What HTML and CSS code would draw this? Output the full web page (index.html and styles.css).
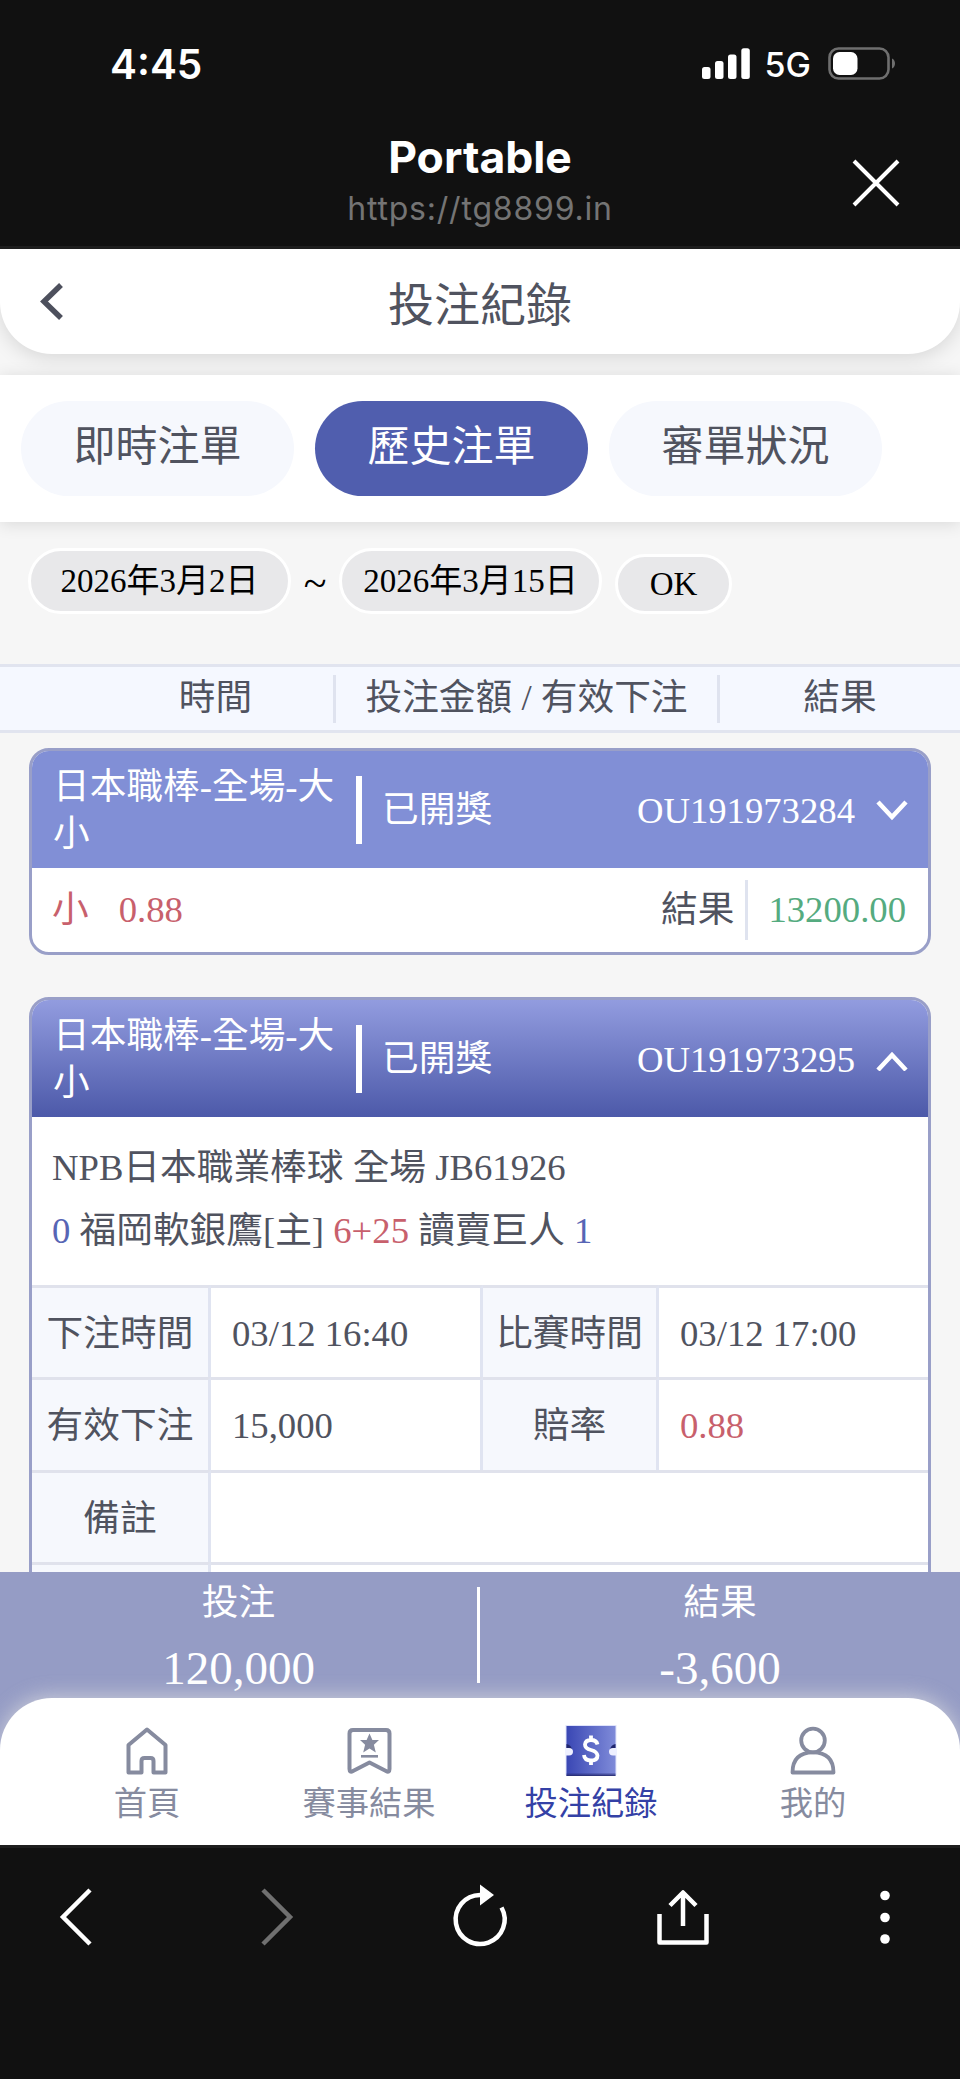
FILE: index.html
```html
<!DOCTYPE html>
<html lang="zh-Hant">
  <head>
    <meta charset="UTF-8" />
    <meta name="viewport" content="width=device-width, initial-scale=1.0" />
    <title>投注紀錄</title>
    <link rel="stylesheet" href="styles.css" />
  </head>
  <body>
    <div class="browser-top">
      <div class="status-bar">
        <span class="clock">4:45</span>
        <div class="status-icons">
          <svg class="signal" width="48" height="32" viewBox="0 0 48 32" fill="#fff">
            <rect x="0" y="19" width="8.5" height="12" rx="2.5" />
            <rect x="13" y="13" width="8.5" height="18" rx="2.5" />
            <rect x="26" y="6.5" width="8.5" height="24.5" rx="2.5" />
            <rect x="39.3" y="0.3" width="8.5" height="30.7" rx="2.5" />
          </svg>
          <span class="network">5G</span>
          <svg class="battery" width="68" height="34" viewBox="0 0 68 34">
            <rect x="1.5" y="1.5" width="59" height="30" rx="9" fill="none" stroke="#6f6f6f" stroke-width="2.6" />
            <rect x="5" y="5" width="24.5" height="23" rx="6.5" fill="#fff" />
            <path d="M64 11.5c4 1.5 4 8.500 0 10z" fill="#6f6f6f" />
          </svg>
        </div>
      </div>
      <div class="title-bar">
        <div class="site">
          <div class="site-name">Portable</div>
          <div class="site-url">https://tg8899.in</div>
        </div>
        <svg class="close" width="50" height="50" viewBox="0 0 50 50" fill="none" stroke="#fff" stroke-width="4">
          <path d="M3 3l44 44M47 3L3 47" />
        </svg>
      </div>
    </div>

    <main class="page">
      <header class="page-header">
        <svg class="back" width="26" height="40" viewBox="0 0 26 40" fill="none" stroke="#4d505d" stroke-width="5.500">
          <path d="M22 3L5 19.500L22 36" />
        </svg>
        <h1>投注紀錄</h1>
      </header>

      <nav class="tabs">
        <a class="tab">即時注單</a>
        <a class="tab active">歷史注單</a>
        <a class="tab">審單狀況</a>
      </nav>

      <div class="date-filter">
        <span class="date">2026年3月2日</span>
        <span class="tilde">~</span>
        <span class="date">2026年3月15日</span>
        <button class="ok">OK</button>
      </div>

      <div class="list-head">
        <span class="col-time">時間</span>
        <span class="col-amount">投注金額 / 有效下注</span>
        <span class="col-result">結果</span>
      </div>

      <section class="bet">
        <div class="bet-head">
          <span class="bet-type">日本職棒-全場-大小</span>
          <span class="bet-state">已開獎</span>
          <span class="bet-id">OU191973284</span>
          <svg class="arrow" width="34" height="24" viewBox="0 0 34 24" fill="none" stroke="#fff" stroke-width="4.500">
            <path d="M3 4l14 15L31 4" />
          </svg>
        </div>
        <div class="bet-summary">
          <span class="pick">小</span>
          <span class="odds">0.88</span>
          <span class="result-label">結果</span>
          <span class="result-value">13200.00</span>
        </div>
      </section>

      <section class="bet open">
        <div class="bet-head">
          <span class="bet-type">日本職棒-全場-大小</span>
          <span class="bet-state">已開獎</span>
          <span class="bet-id">OU191973295</span>
          <svg class="arrow" width="34" height="24" viewBox="0 0 34 24" fill="none" stroke="#fff" stroke-width="4.500">
            <path d="M3 23l14-15l14 15" />
          </svg>
        </div>
        <div class="match">
          <p>NPB日本職業棒球 全場 JB61926</p>
          <p><span class="blue">0</span> 福岡軟銀鷹[主] <span class="red">6+25</span> 讀賣巨人 <span class="blue">1</span></p>
        </div>
        <div class="detail">
          <div class="label">下注時間</div>
          <div class="value">03/12 16:40</div>
          <div class="label">比賽時間</div>
          <div class="value">03/12 17:00</div>
          <div class="label">有效下注</div>
          <div class="value">15,000</div>
          <div class="label">賠率</div>
          <div class="value red">0.88</div>
          <div class="label">備註</div>
          <div class="value wide"></div>
          <div class="label"></div>
          <div class="value wide"></div>
        </div>
      </section>
    </main>

    <div class="totals">
      <div class="total">
        <span class="total-label">投注</span>
        <span class="total-value">120,000</span>
      </div>
      <div class="total">
        <span class="total-label">結果</span>
        <span class="total-value">-3,600</span>
      </div>
    </div>

    <nav class="bottom-nav">
      <a class="nav-item">
        <svg width="52" height="52" viewBox="0 0 52 52" fill="none" stroke="#868b9f" stroke-width="4" stroke-linejoin="round">
          <path d="M26 4.500L44.500 20V47.500H32.500V36q0-3-3-3h-6q-3 0-3 3v11.500H7.500V20z" />
        </svg>
        <span>首頁</span>
      </a>
      <a class="nav-item">
        <svg width="52" height="52" viewBox="0 0 52 52" fill="none" stroke="#868b9f" stroke-width="4" stroke-linejoin="round">
          <path d="M10 5h33q3.500 0 3.500 3.500V44q0 4-3.500 2L26.500 37.500L10 46q-3.500 2-3.500-2V8.500Q6.500 5 10 5z" />
          <path d="M18 31.300h17" stroke-width="2.600" />
          <path d="M26.500 8.500l2.900 6.500h6.600l-5.100 4.800l1.900 7.700l-6.300-4l-6.300 4l1.900-7.700l-5.100-4.800h6.600z" fill="#868b9f" stroke="none" />
        </svg>
        <span>賽事結果</span>
      </a>
      <a class="nav-item active">
        <svg width="52" height="52" viewBox="0 0 52 52">
          <defs>
            <linearGradient id="ticket" x1="0" y1="0" x2="1" y2="0">
              <stop offset="0" stop-color="#3a47b4" />
              <stop offset="1" stop-color="#7f8bd9" />
            </linearGradient>
            <linearGradient id="ticket-edge" x1="0" y1="0" x2="0" y2="1">
              <stop offset="0" stop-color="#2a2f80" stop-opacity="0" />
              <stop offset="1" stop-color="#262a6c" />
            </linearGradient>
          </defs>
          <rect x="0.500" y="0" width="51" height="50" fill="#dfe3fb" />
          <rect x="1.500" y="1" width="49" height="50" fill="url(#ticket)" />
          <rect x="1.500" y="47.500" width="49" height="3.500" fill="url(#ticket-edge)" />
          <path d="M1.500 19q5 1 5.500 6h-5.500zM50.500 19q-5 1-5.500 6h5.500z" fill="#20266e" />
          <path d="M0 23h4q4 0 4 3.700t-4 3.700h-4zM52 23h-4q-4 0-4 3.700t4 3.700h4z" fill="#eef0ff" />
          <path d="M32.500 19.500q-1-4.500-6.500-4.500t-6 4.500q0 4 6 5.500t6.500 5.500q0 5-6.500 5t-7-5.500M26 10.500v5M26 35v5" fill="none" stroke="#fff" stroke-width="3.800" />
        </svg>
        <span>投注紀錄</span>
      </a>
      <a class="nav-item">
        <svg width="52" height="52" viewBox="0 0 52 52" fill="none" stroke="#868b9f" stroke-width="3.800" stroke-linejoin="round">
          <circle cx="26" cy="15.500" r="11.800" />
          <path d="M5.500 47.500h41q0-20-20.500-20.200q-20.500 .2-20.500 20.200z" />
        </svg>
        <span>我的</span>
      </a>
    </nav>

    <div class="toolbar">
      <svg width="60" height="66" viewBox="0 0 60 66" fill="none" stroke="#fff" stroke-width="4.500">
        <path d="M45 6L18 33L45 60" />
      </svg>
      <svg width="60" height="66" viewBox="0 0 60 66" fill="none" stroke="#707070" stroke-width="4.500">
        <path d="M15 6L42 33L15 60" />
      </svg>
      <svg width="60" height="66" viewBox="0 0 60 66" fill="none" stroke="#fff" stroke-width="4.500">
        <path d="M30 11A24.500 24.500 0 1 0 51.500 23.500" />
        <path d="M30 0.500v21L44 11z" fill="#fff" stroke="none" />
      </svg>
      <svg width="60" height="66" viewBox="0 0 60 66" fill="none" stroke="#fff" stroke-width="4.500">
        <path d="M6.500 30v28.500h47V30M30 42V8M17 21.500L30 8.500L43 21.500" stroke-linejoin="round" />
      </svg>
      <svg width="60" height="66" viewBox="0 0 60 66" fill="#fff">
        <circle cx="30" cy="11.500" r="4.800" />
        <circle cx="30" cy="33.500" r="4.800" />
        <circle cx="30" cy="55" r="4.800" />
      </svg>
    </div>
  </body>
</html>
```
FILE: styles.css
```css
* {
  box-sizing: border-box;
  margin: 0;
  padding: 0;
}

body {
  display: flex;
  flex-direction: column;
  width: 960px;
  height: 2079px;
  overflow: hidden;
  background-color: #111;
  color: #50535f;
  font-family: "Liberation Serif", "Noto Sans CJK TC", serif;
  font-size: 36.7px;
}

svg {
  display: block;
  flex-shrink: 0;
}

/* browser chrome */
.browser-top {
  height: 249px;
  flex-shrink: 0;
  border-bottom: 3px solid #1e1e1e;
  color: #fff;
  font-family: Inter, "Liberation Sans", sans-serif;
}

.status-bar {
  display: flex;
  justify-content: space-between;
  height: 128px;
  padding: 0 64px 0 110px;
  align-items: center;
}

.clock {
  font-size: 40.5px;
  font-weight: 600;
}

.status-icons {
  display: flex;
  align-items: center;
}

.network {
  margin: 1px 17px 0 15px;
  font-size: 34px;
  font-weight: 500;
}

.title-bar {
  position: relative;
  text-align: center;
}

.site-name {
  padding-top: 2px;
  font-size: 44.5px;
  font-weight: 700;
  line-height: 54px;
}

.site-url {
  margin-top: 3px;
  color: #747474;
  font-size: 32px;
  letter-spacing: 0.8px;
  line-height: 44px;
}

.close {
  position: absolute;
  top: 30px;
  right: 59px;
}

/* page */
.page {
  height: 1323px;
  flex-shrink: 0;
  overflow: hidden;
  background-color: #f6f6f6;
}

.page-header {
  display: grid;
  grid-template-columns: 80px 1fr 80px;
  align-items: center;
  height: 105px;
  background-color: #fff;
  border-radius: 0 0 52px 52px;
  box-shadow: 0 4px 20px rgba(0, 0, 0, 0.13);
}

.back {
  margin: 0 0 0 39px;
}

.page-header h1 {
  padding-top: 8px;
  text-align: center;
  font-size: 46px;
  font-weight: 400;
  line-height: 60px;
}

.tabs {
  position: relative;
  display: flex;
  gap: 21px;
  margin-top: 21px;
  padding: 26px 21px;
  background-color: #fff;
  box-shadow: 0 2px 16px rgba(0, 0, 0, 0.12);
}

.tab {
  width: 273px;
  height: 95px;
  border-radius: 48px;
  background-color: #f6f8fd;
  text-align: center;
  font-size: 42px;
  line-height: 93px;
}

.tab.active {
  background-color: #505eae;
  color: #fff;
}

.date-filter {
  display: flex;
  align-items: flex-end;
  height: 92px;
  padding-left: 28px;
  color: #000;
  font-size: 33px;
}

.date,
.ok {
  border: 3px solid #fff;
  border-radius: 34px;
  background-color: #e8e8ea;
  text-align: center;
}

.date {
  width: 263px;
  height: 66px;
  line-height: 61px;
}

.tilde {
  width: 48px;
  text-align: center;
  font-size: 42px;
  line-height: 62px;
}

.ok {
  width: 117px;
  height: 60px;
  margin-left: 13px;
  font: inherit;
  line-height: 50px;
}

.list-head {
  display: flex;
  align-items: center;
  height: 69px;
  margin-top: 50px;
  border-top: 3px solid #e1e4ef;
  border-bottom: 3px solid #e1e4ef;
  background-color: #f5f8ff;
  text-align: center;
  line-height: 46px;
}

.list-head span {
  height: 48px;
}

.col-time {
  width: 336px;
  padding-left: 98px;
  border-right: 3px solid #dfe3ef;
}

.col-amount {
  width: 384px;
  border-right: 3px solid #dfe3ef;
}

.col-result {
  flex: 1;
}

.bet {
  margin: 15px 29px 43px;
  overflow: hidden;
  border: 3px solid #999fc8;
  border-radius: 20px;
  background-color: #fff;
}

.bet-head {
  display: flex;
  align-items: center;
  height: 117px;
  padding-right: 19px;
  background-color: #818fd6;
  color: #fff;
}

.open .bet-head {
  background: linear-gradient(#929cdf, #4c59a9);
}

.bet-type {
  width: 324px;
  padding: 0 18px 0 21px;
  line-height: 47px;
}

.bet-state {
  flex: 1;
  height: 68px;
  padding-left: 20px;
  border-left: 6px solid #fff;
  line-height: 68px;
}

.bet-id {
  margin: 2px 20px 0 0;
}

.bet-summary {
  display: flex;
  align-items: center;
  height: 84px;
  padding: 0 22px 0 20px;
  line-height: 60px;
}

.pick,
.odds,
.red {
  color: #c8606c;
}

.odds {
  flex: 1;
  margin-left: 30px;
}

.result-label {
  padding-right: 11px;
}

.result-value {
  padding-left: 20px;
  border-left: 3px solid #dfe3ef;
  color: #55ab80;
}

.bet.open {
  margin-top: -1px;
}

.match {
  height: 168px;
  padding: 19px 20px 0;
  line-height: 63px;
}

.blue {
  color: #5765b5;
}

.detail {
  display: grid;
  grid-template-columns: 179px 272px 176px 1fr;
  grid-auto-rows: 92.3px;
}

.label,
.value {
  border-top: 3px solid #e0e2ec;
  line-height: 92px;
}

.label {
  border-right: 3px solid #e0e4f1;
  background-color: #f6f8fd;
  text-align: center;
}

.value {
  padding-left: 21px;
}

.value:nth-child(4n + 2) {
  border-right: 3px solid #e0e4f1;
}

.value.wide {
  grid-column: span 3;
  border-right: none;
}

/* totals and navigation */
.totals {
  display: flex;
  height: 190px;
  flex-shrink: 0;
  padding-top: 15px;
  background-color: #959cc5;
  color: #fff;
}

.total {
  display: flex;
  flex-direction: column;
  align-items: center;
  width: 480px;
  height: 96px;
}

.total:first-child {
  border-right: 3px solid #fff;
}

.total-label {
  margin-top: -11px;
  line-height: 54px;
}

.total-value {
  font-size: 47px;
  line-height: 76px;
}

.bottom-nav {
  position: relative;
  display: flex;
  justify-content: space-around;
  height: 147px;
  flex-shrink: 0;
  margin-top: -64px;
  padding: 27px 36px 0;
  background-color: #fff;
  border-radius: 52px 52px 0 0;
  box-shadow: 0 -2px 20px rgba(225, 225, 225, 0.7);
  clip-path: inset(-40px 0 0 0);
}

.nav-item {
  display: flex;
  flex-direction: column;
  align-items: center;
  width: 222px;
  color: #868b9f;
  font-size: 33.3px;
  line-height: 53px;
}

.nav-item.active {
  color: #3441a6;
}

.toolbar {
  display: flex;
  justify-content: space-between;
  height: 234px;
  padding: 36px 45px 0;
  border-top: 3px solid #1e1e1e;
}
```
